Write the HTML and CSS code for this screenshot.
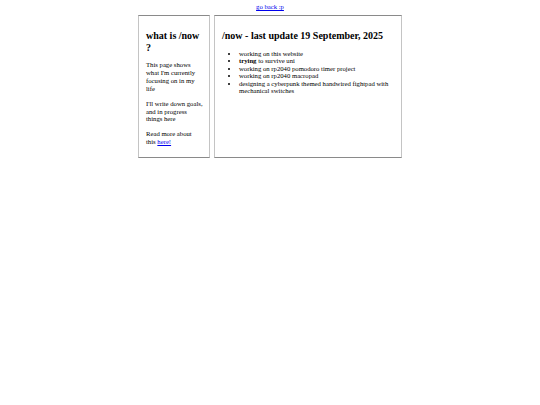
FILE: index.html
```html
<!DOCTYPE html>
<html>
<head>
<meta charset="utf-8">
<link rel="stylesheet" href="styles.css">
</head>
<body>
<div class="top"><a href="#">go back :p</a></div>
<div class="wrap">
  <div class="box side">
    <h2>what is /now ?</h2>
    <p>This page shows what I'm currently focusing on in my life</p>
    <p>I'll write down goals, and in progress things here</p>
    <p>Read more about this <a href="#">here!</a></p>
  </div>
  <div class="box main">
    <h2>/now - last update 19 September, 2025</h2>
    <ul>
      <li>working on this website</li>
      <li><b>trying</b> to survive uni</li>
      <li>working on rp2040 pomodoro timer project</li>
      <li>working on rp2040 macropad</li>
      <li>designing a cyberpunk themed handwired fightpad with mechanical switches</li>
    </ul>
  </div>
</div>
</body>
</html>
```
FILE: styles.css
```css
html, body {
  margin: 0;
  padding: 0;
  background: #fff;
}
body {
  font-family: "Liberation Serif", "Times New Roman", serif;
  font-size: 6.7px;
  color: #000;
  padding-top: 3px;
}
a {
  color: #0000ee;
}
.top {
  text-align: center;
  line-height: 8px;
  height: 8px;
}
.wrap {
  display: flex;
  justify-content: center;
  gap: 4px;
  margin-top: 4px;
}
.box {
  border-style: solid;
  border-width: 1px;
  border-color: #8a8a8a #c4c4c4 #8a8a8a #c4c4c4;
  padding: 0 7px;
}
.side {
  width: 57px;
  padding-right: 6px;
}
.main {
  width: 172px;
}
h2 {
  font-size: 10px;
  font-weight: bold;
  margin: 14px 0 8px;
  line-height: 11.5px;
}
p {
  margin: 7px 0;
  line-height: 7.9px;
}
.side p:last-child {
  margin-bottom: 11px;
}
ul {
  margin: 7px 0;
  padding-left: 17px;
}
li {
  line-height: 7.6px;
}
```
